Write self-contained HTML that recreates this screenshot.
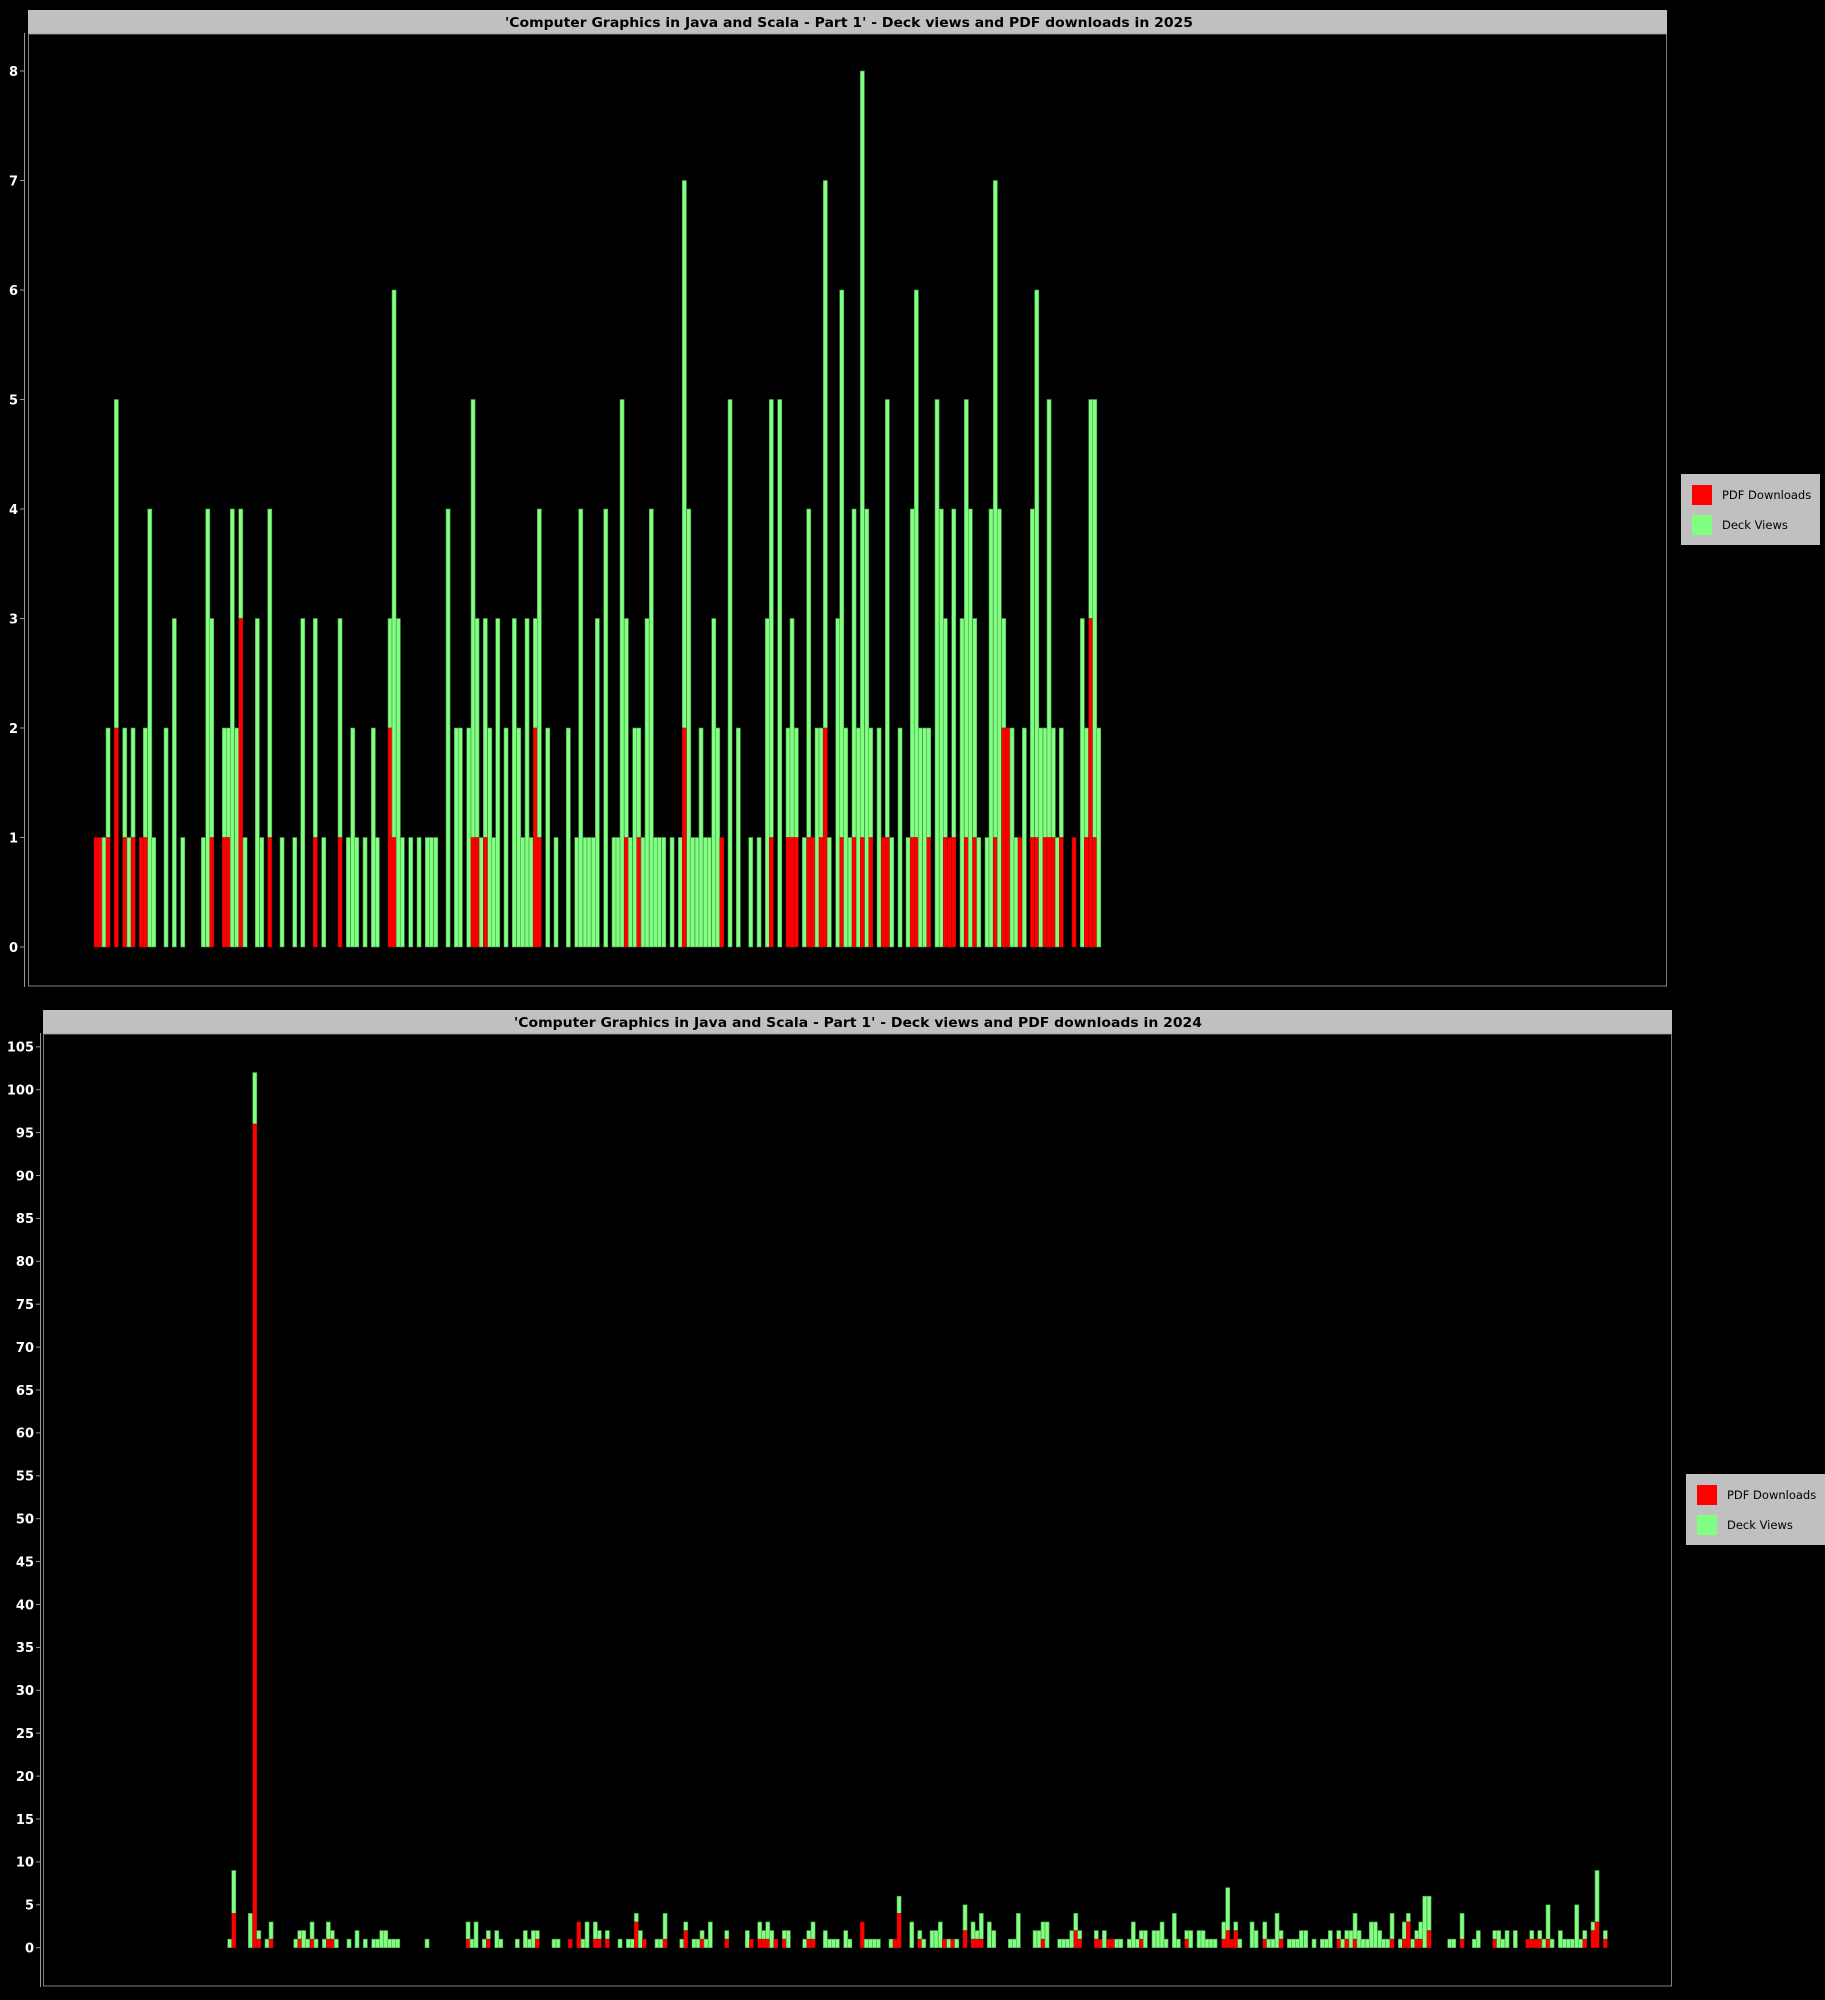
<!DOCTYPE html>
<html><head><meta charset="utf-8">
<style>
html,body{margin:0;padding:0;background:#000;width:1825px;height:2000px;overflow:hidden}
svg{display:block}
text{font-family:"DejaVu Sans","Liberation Sans",sans-serif}
.t{font-weight:bold;font-size:13.5px;fill:#000}
.l{font-weight:bold;font-size:13px;fill:#fff}
.g{font-size:11.5px;fill:#000}
</style></head><body>
<svg id="s" width="1825" height="2000" viewBox="0 0 1825 2000" xmlns="http://www.w3.org/2000/svg">
<rect width="1825" height="2000" fill="#000"/>
<!-- chart 1 -->
<rect x="28" y="10" width="1639" height="23.5" fill="#c0c0c0"/>
<line x1="28" y1="33.5" x2="1667" y2="33.5" stroke="#e0e0e0" stroke-width="1"/>
<text class="t" x="505" y="27" textLength="688" lengthAdjust="spacingAndGlyphs">'Computer Graphics in Java and Scala - Part 1' - Deck views and PDF downloads in 2025</text>
<rect x="28.5" y="34" width="1638" height="952" fill="none" stroke="#808080" stroke-width="1"/>
<line x1="24.5" y1="33" x2="24.5" y2="987" stroke="#999" stroke-width="1"/>
<g id="ax1"></g>
<g id="b1"></g>
<rect x="1681" y="474" width="139" height="71" fill="#c0c0c0"/>
<rect x="1692" y="485" width="20" height="20" fill="#ff0000"/>
<rect x="1692" y="515" width="20" height="20" fill="#80ff80"/>
<text class="g" x="1722" y="499">PDF Downloads</text>
<text class="g" x="1722" y="529">Deck Views</text>
<!-- chart 2 -->
<rect x="43" y="1010" width="1629" height="23.5" fill="#c0c0c0"/>
<line x1="43" y1="1033.5" x2="1672" y2="1033.5" stroke="#e0e0e0" stroke-width="1"/>
<text class="t" x="514" y="1027" textLength="688" lengthAdjust="spacingAndGlyphs">'Computer Graphics in Java and Scala - Part 1' - Deck views and PDF downloads in 2024</text>
<rect x="43.5" y="1034" width="1628" height="952" fill="none" stroke="#808080" stroke-width="1"/>
<line x1="40.5" y1="1033" x2="40.5" y2="1987" stroke="#999" stroke-width="1"/>
<g id="ax2"></g>
<g id="b2"></g>
<rect x="1686" y="1474" width="139" height="71" fill="#c0c0c0"/>
<rect x="1697" y="1485" width="20" height="20" fill="#ff0000"/>
<rect x="1697" y="1515" width="20" height="20" fill="#80ff80"/>
<text class="g" x="1727" y="1499">PDF Downloads</text>
<text class="g" x="1727" y="1529">Deck Views</text>

<text class="l" x="18" y="952" text-anchor="end">0</text>
<text class="l" x="18" y="842.5" text-anchor="end">1</text>
<text class="l" x="18" y="733" text-anchor="end">2</text>
<text class="l" x="18" y="623.5" text-anchor="end">3</text>
<text class="l" x="18" y="514" text-anchor="end">4</text>
<text class="l" x="18" y="404.5" text-anchor="end">5</text>
<text class="l" x="18" y="295" text-anchor="end">6</text>
<text class="l" x="18" y="185.5" text-anchor="end">7</text>
<text class="l" x="18" y="76" text-anchor="end">8</text>

<text class="l" x="34" y="1952.5" text-anchor="end">0</text>
<text class="l" x="34" y="1909.6" text-anchor="end">5</text>
<text class="l" x="34" y="1866.7" text-anchor="end">10</text>
<text class="l" x="34" y="1823.8" text-anchor="end">15</text>
<text class="l" x="34" y="1780.9" text-anchor="end">20</text>
<text class="l" x="34" y="1738" text-anchor="end">25</text>
<text class="l" x="34" y="1695.1" text-anchor="end">30</text>
<text class="l" x="34" y="1652.2" text-anchor="end">35</text>
<text class="l" x="34" y="1609.3" text-anchor="end">40</text>
<text class="l" x="34" y="1566.4" text-anchor="end">45</text>
<text class="l" x="34" y="1523.5" text-anchor="end">50</text>
<text class="l" x="34" y="1480.6" text-anchor="end">55</text>
<text class="l" x="34" y="1437.7" text-anchor="end">60</text>
<text class="l" x="34" y="1394.8" text-anchor="end">65</text>
<text class="l" x="34" y="1351.9" text-anchor="end">70</text>
<text class="l" x="34" y="1309" text-anchor="end">75</text>
<text class="l" x="34" y="1266.1" text-anchor="end">80</text>
<text class="l" x="34" y="1223.2" text-anchor="end">85</text>
<text class="l" x="34" y="1180.3" text-anchor="end">90</text>
<text class="l" x="34" y="1137.4" text-anchor="end">95</text>
<text class="l" x="34" y="1094.5" text-anchor="end">100</text>
<text class="l" x="34" y="1051.6" text-anchor="end">105</text>
</svg>
<script>
var NS="http://www.w3.org/2000/svg";
function el(p,n,a){var e=document.createElementNS(NS,n);for(var k in a)e.setAttribute(k,a[k]);p.appendChild(e);return e;}
var ax1=document.getElementById('ax1'),ax2=document.getElementById('ax2');
for(var v=0;v<=8;v++){var y=947-109.5*v;el(ax1,'line',{x1:20,y1:y,x2:24,y2:y,stroke:'#999','stroke-width':1});}
for(var v=0;v<=105;v+=5){var y=1947.7-8.58*v;el(ax2,'line',{x1:36,y1:y,x2:40,y2:y,stroke:'#999','stroke-width':1});}
var d1=[[94,1,1],[98,1,1],[102,1,0],[106,2,1],[114.3,5,2],[122.7,2,1],[127,1,0],[131,2,1],[139.3,1,1],[143.3,2,1],[147.7,4,0],[151.7,1,0],[164,2,0],[172.3,3,0],[180.7,1,0],[201.3,1,0],[205.7,4,0],[209.7,3,1],[222.3,2,1],[226.3,2,1],[230.3,4,0],[234.7,2,0],[238.7,4,3],[243,1,0],[255.3,3,0],[259.7,1,0],[267.7,4,1],[280,1,0],[292.7,1,0],[300.7,3,0],[313.3,3,1],[321.7,1,0],[338,3,1],[346.3,1,0],[350.7,2,0],[354.7,1,0],[363,1,0],[371.3,2,0],[375.3,1,0],[388,3,2],[392,6,1],[396.3,3,0],[400.3,1,0],[408.7,1,0],[417,1,0],[425.3,1,0],[429.3,1,0],[433.7,1,0],
[446,4,0],[454.3,2,0],[458.3,2,0],[466.7,2,0],[471,5,1],[475,3,1],[479.3,1,0],[483.3,3,1],[487.7,2,0],[491.7,1,0],[495.7,3,0],[504,2,0],[512.3,3,0],[516.7,2,0],[520.7,1,0],[525,3,0],[529,1,0],[533.3,3,2],[537.3,4,1],[545.7,2,0],[554,1,0],[566.3,2,0],[574.7,1,0],[578.7,4,0],[583,1,0],[587,1,0],[591.3,1,0],[595.3,3,0],[603.7,4,0],[612,1,0],[616,1,0],[620,5,0],[624.3,3,1],[628.3,1,0],[632.7,2,0],[636.7,2,1],[641,1,0],[645,3,0],[649.3,4,0],[653.3,1,0],[657.3,1,0],[661.7,1,0],[670,1,0],[678.3,1,0],[682.3,7,2],[686.7,4,0],[690.7,1,0],[695,1,0],[699,2,0],[703.3,1,0],[707.3,1,0],[711.7,3,0],[715.7,2,0],[719.7,1,1],[728,5,0],[736.3,2,0],[748.7,1,0],[757,1,0],[765.3,3,0],[769.3,5,1],[777.7,5,0],
[786,2,1],[790,3,1],[794.3,2,1],[802.3,1,0],[806.7,4,1],[810.7,1,1],[815,2,0],[819,2,1],[823.3,7,2],[827.3,1,0],[835.7,3,0],[839.7,6,1],[843.7,2,0],[848,1,0],[852,4,1],[856.3,2,0],[860.3,8,1],[864.7,4,0],[868.7,2,1],[877,2,0],[881.3,1,1],[885.3,5,1],[889.7,1,0],[898,2,0],[906,1,0],[910.3,4,1],[914.3,6,1],[918.3,2,0],[922.7,2,0],[926.7,2,1],[935,5,0],[939.3,4,0],[943.3,3,1],[947.7,1,1],[951.7,4,1],[960,3,0],[964.3,5,1],[968.3,4,0],[972.7,3,1],[976.7,1,0],[985,1,0],[989,4,0],[993.3,7,1],[997.3,4,0],[1001.7,3,2],[1005.7,2,2],[1010,2,0],[1014,1,0],[1018,1,1],[1022.3,2,0],[1030.3,4,1],[1034.7,6,1],[1038.7,2,0],[1043,2,1],[1047,5,1],[1051.3,2,1],[1055.3,1,0],[1059.3,2,1],[1072,1,1],[1080.3,3,0],[1084.3,2,1],[1088.7,5,3],[1092.7,5,1],[1096.7,2,0]];
var d2=[[227.7,1,0],[231.7,9,4],[248.3,4,0],[252.7,102,96],[256.7,2,1],[265,1,0],[269,3,1],[293.7,1,0],[297.7,2,1],[301.7,2,0],[305.7,1,0],[310,3,1],[314,1,0],[322.3,1,0],[326.3,3,1],[330.3,2,1],[334.3,1,0],[347,1,0],[355,2,0],[363.3,1,0],[371.7,1,0],[375.7,1,0],[379.7,2,0],[383.7,2,0],[387.7,1,0],[391.7,1,0],[395.7,1,0],[425,1,0],[466,3,1],[470,1,0],[474,3,0],[482.3,1,0],[486.3,2,1],[494.7,2,0],[498.7,1,0],[515.3,1,0],[523.3,2,0],[527.3,1,0],[531.3,2,0],[535.3,2,1],[552,1,0],[556,1,0],[568.3,1,1],
[576.7,3,3],[581,1,0],[585,3,0],[593.3,3,1],[597.3,2,1],[605.3,2,1],[618,1,0],[626.3,1,0],[630.3,1,0],[634.3,4,3],[638.3,2,0],[642.3,1,1],[655,1,0],[659,1,0],[663,4,1],[679.7,1,0],[683.7,3,2],[692,1,0],[696,1,0],[700,2,1],[704,1,0],[708.3,3,0],[724.7,2,1],[745.3,2,0],[749.3,1,1],[757.7,3,1],[761.7,2,1],[765.7,3,1],[769.7,2,0],[773.7,1,1],[782.3,2,1],[786.3,2,0],[802.7,1,0],[806.7,2,1],[811,3,1],[823.3,2,0],[827.3,1,0],[831.3,1,0],[835.3,1,0],[843.7,2,0],[847.7,1,0],[860.3,3,3],[864.3,1,0],[868.3,1,0],[872.3,1,0],[876.3,1,0],[889,1,0],[893,1,1],[897,6,4],[909.7,3,0],
[917.7,2,1],[921.7,1,0],[930,2,0],[934,2,0],[938.3,3,0],[942.3,1,1],[946.7,1,0],[950.7,1,1],[954.7,1,0],[963,5,2],[971,3,1],[975,2,1],[979.3,4,1],[987.3,3,0],[991.7,2,0],[1008.3,1,0],[1012.3,1,0],[1016.3,4,0],[1033,2,0],[1037,2,0],[1041,3,1],[1045,3,0],[1057.7,1,0],[1061.7,1,0],[1065.7,1,0],[1069.7,2,0],[1073.7,4,2],[1077.7,2,1],[1094.3,2,1],[1098.3,1,1],[1102.3,2,0],[1106.7,1,1],[1110.7,1,1],[1114.7,1,0],[1118.7,1,0],[1127.3,1,0],[1131.3,3,0],[1135.3,1,0],[1139.3,2,1],[1143.3,2,0],[1152,2,0],[1156,2,0],[1160,3,0],[1164,1,0],[1172.3,4,0],[1176.3,1,0],[1184.7,2,1],[1188.7,2,0],[1197,2,0],[1201,2,0],[1205,1,0],[1209,1,0],[1213,1,0],[1221.7,3,1],[1225.7,7,2],[1229.7,1,1],[1233.7,3,2],[1237.7,1,0],[1250,3,0],[1254,2,0],
[1262.7,3,1],[1266.7,1,0],[1271,1,0],[1275,4,0],[1279,2,1],[1287.3,1,0],[1291.3,1,0],[1295.3,1,0],[1299.3,2,0],[1303.7,2,0],[1312,1,0],[1320.3,1,0],[1324.3,1,0],[1328.3,2,0],[1336.7,2,1],[1340.7,1,0],[1344.7,2,1],[1349,2,0],[1353,4,1],[1357,2,0],[1361,1,0],[1365.3,1,0],[1369.3,3,0],[1373.3,3,0],[1377.7,2,0],[1381.7,1,0],[1385.7,1,0],[1390,4,1],[1398.3,1,0],[1402.3,3,1],[1406.3,4,3],[1410.7,1,0],[1414.7,2,1],[1418.7,3,1],[1422.7,6,0],[1427,6,2],[1447.7,1,0],[1451.7,1,0],[1460,4,1],[1472.3,1,0],[1476.3,2,0],[1492.7,2,1],[1496.7,2,0],[1500.7,1,0],[1505,2,0],[1513.3,2,0],[1525.7,1,1],[1529.7,2,1],[1533.7,1,1],[1537.7,2,1],[1542,1,0],[1546,5,1],[1550,1,0],[1558.3,2,0],[1562.3,1,0],[1566.3,1,0],[1570.3,1,0],[1574.7,5,0],[1578.7,1,0],[1582.7,2,1],[1591,3,2],[1595,9,3],[1603.3,2,1]];
function draw(g,data,zero,unit){
  data.forEach(function(b){
    var x=b[0],t=b[1],r=b[2],w=4.1;
    if(t>r) el(g,'rect',{x:x,y:zero-t*unit,width:w,height:(t-r)*unit,fill:'#80ff80',stroke:'#4a9a4a','stroke-width':0.6});
    if(r>0) el(g,'rect',{x:x,y:zero-r*unit,width:w,height:r*unit,fill:'#ff0000',stroke:'#b00000','stroke-width':0.4});
  });
}
draw(document.getElementById('b1'),d1,947,109.5);
draw(document.getElementById('b2'),d2,1947.7,8.58);
</script>
</body></html>
